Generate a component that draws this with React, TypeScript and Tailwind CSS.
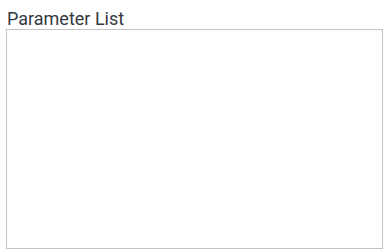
export default function App() {
  return (
    <div className="w-[390px] h-[250px] bg-white" style={{ fontFamily: "Roboto, 'Liberation Sans', sans-serif" }}>
      <div className="pl-[6px] pt-[8px] flex flex-col">
        <label className="block text-[18px] leading-[21px] text-[#343a40] pl-[1px]">Parameter List</label>
        <div className="w-[377px] h-[220px] border border-[#c4c4c4] bg-white" />
      </div>
    </div>
  );
}
